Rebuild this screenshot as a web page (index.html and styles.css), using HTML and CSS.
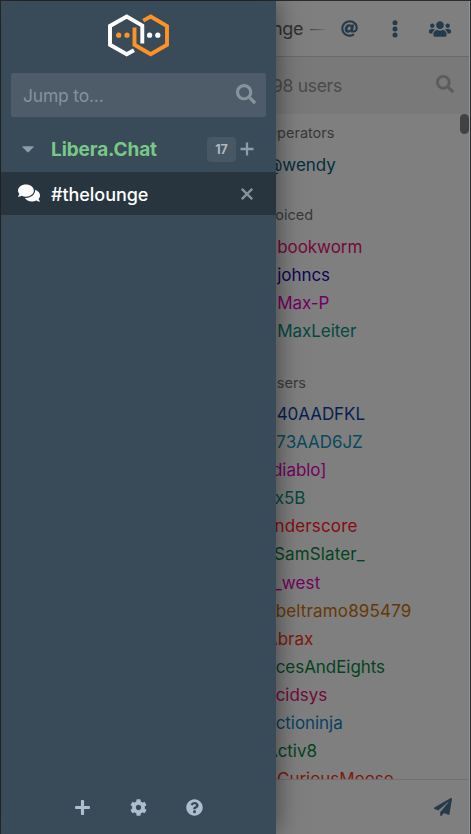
FILE: index.html
```html
<!DOCTYPE html>
<html lang="en">
<head>
<meta charset="utf-8">
<title>The Lounge</title>
<link rel="stylesheet" href="styles.css">
</head>
<body>
<svg class="defs" width="0" height="0">
  <symbol id="search" viewBox="0 0 512 512"><path d="M505 442.7L405.3 343c-4.5-4.5-10.6-7-17-7H372c27.6-35.3 44-79.7 44-128C416 93.1 322.9 0 208 0S0 93.1 0 208s93.1 208 208 208c48.3 0 92.7-16.4 128-44v16.3c0 6.4 2.5 12.5 7 17l99.7 99.7c9.4 9.4 24.6 9.4 33.9 0l28.3-28.3c9.4-9.4 9.4-24.6.1-34zM208 336c-70.7 0-128-57.2-128-128 0-70.7 57.2-128 128-128 70.7 0 128 57.2 128 128 0 70.7-57.2 128-128 128z"/></symbol>
</svg>
<div class="app">
  <main class="chat">
    <header class="topbar">
      <span class="title">#thelounge</span>
      <span class="topic">—</span>
      <svg class="icon-at" viewBox="0 0 512 512"><path d="M256 8C118.941 8 8 118.919 8 256c0 137.059 110.919 248 248 248 48.154 0 95.342-14.14 135.408-40.223 12.005-7.815 14.625-24.288 5.552-35.372l-10.177-12.433c-7.671-9.371-21.179-11.667-31.373-5.129C325.92 429.757 291.314 440 256 440c-101.458 0-184-82.542-184-184S154.542 72 256 72c100.139 0 184 57.619 184 160 0 38.786-21.093 79.742-58.17 83.693-17.349-.454-16.91-12.857-13.476-30.024l23.433-121.11C394.653 149.75 383.308 136 368.225 136h-44.981a13.518 13.518 0 0 0-13.432 11.993l-.01.092c-14.697-17.901-40.448-21.775-59.971-21.775-74.58 0-137.831 62.234-137.831 151.46 0 65.303 36.785 105.87 96 105.87 26.984 0 57.369-15.637 74.991-38.333 9.522 34.104 40.613 34.103 70.71 34.103C462.609 379.41 504 307.798 504 232 504 95.653 394.023 8 256 8zm-21.68 304.43c-22.249 0-36.07-15.623-36.07-40.771 0-44.993 30.779-72.729 58.63-72.729 22.292 0 35.601 15.241 35.601 40.77 0 45.061-33.875 72.73-58.161 72.73z"/></svg>
      <svg class="icon-more" viewBox="0 0 6 18"><circle cx="3" cy="2.7" r="2.5"/><circle cx="3" cy="8.9" r="2.5"/><circle cx="3" cy="15.1" r="2.5"/></svg>
      <svg class="icon-users" viewBox="0 0 640 512"><path d="M96 224c35.3 0 64-28.7 64-64s-28.7-64-64-64-64 28.7-64 64 28.7 64 64 64zm448 0c35.3 0 64-28.7 64-64s-28.7-64-64-64-64 28.7-64 64 28.7 64 64 64zm32 32h-64c-17.6 0-33.5 7.1-45.1 18.6 40.3 22.1 68.9 62 75.1 109.4h66c17.7 0 32-14.3 32-32v-32c0-35.3-28.7-64-64-64zm-256 0c61.9 0 112-50.1 112-112S381.9 32 320 32 208 82.1 208 144s50.1 112 112 112zm76.8 32h-8.3c-20.8 10-43.9 16-68.5 16s-47.6-6-68.5-16h-8.3C179.6 288 128 339.6 128 403.2V432c0 26.5 21.5 48 48 48h288c26.5 0 48-21.5 48-48v-28.8c0-63.6-51.6-115.2-115.2-115.2zm-223.7-13.4C161.5 263.1 145.6 256 128 256H64c-35.3 0-64 28.7-64 64v32c0 17.7 14.3 32 32 32h65.9c6.3-47.4 34.9-87.3 75.2-109.4z"/></svg>
    </header>
    <div class="user-search"><span>98 users</span><svg class="icon-search"><use href="#search"/></svg></div>
    <section class="userlist">
      <div class="names">
        <h3>Operators</h3>
        <p class="c-teal">@wendy</p>
        <h3>Voiced</h3>
        <p class="c-rose">+bookworm</p>
        <p class="c-indigo">+johncs</p>
        <p class="c-magenta">+Max-P</p>
        <p class="c-green">+MaxLeiter</p>
        <h3 class="regulars">Users</h3>
        <p class="c-navy">040AADFKL</p>
        <p class="c-cyan">073AAD6JZ</p>
        <p class="c-magenta">[diablo]</p>
        <p class="c-green narrow-lead">0x5B</p>
        <p class="c-red wide">_nderscore</p>
        <p class="c-forest wide">_SamSlater_</p>
        <p class="c-magenta wide">__west</p>
        <p class="c-brown wide">abeltramo895479</p>
        <p class="c-brick">Abrax</p>
        <p class="c-forest narrow-lead">AcesAndEights</p>
        <p class="c-rose narrow-lead">Acidsys</p>
        <p class="c-blue narrow-lead">Actioninja</p>
        <p class="c-forest">Activ8</p>
        <p class="c-brick">ACuriousMoose</p>
      </div>
      <div class="scrollbar"></div>
    </section>
    <footer class="compose"><svg class="icon-send" viewBox="0 0 512 512"><path d="M476 3.2L12.5 270.6c-18.1 10.4-15.8 35.6 2.2 43.2L121 358.4l287.3-253.2c5.5-4.9 13.3 2.6 8.6 8.3L176 407v80.5c0 23.6 28.5 32.9 42.5 15.8L282 426l124.6 52.2c14.2 6 30.4-2.9 33-18.2l72-432C515 7.8 493.3-6.8 476 3.2z"/></svg></footer>
  </main>

  <aside class="sidebar">
    <svg class="logo" viewBox="107 14 63 43" stroke-width="3.9">
      <path fill="none" stroke="#fff" d="M134 50.2l-7.3 4.1-16.7-9.5V26l16.7-9.5L142.3 25.6v17.8"/>
      <path fill="none" stroke="#ff9226" d="M143.2 20.6l7.5-4.1L167 26v18.8l-16.3 9.5-16.2-9.5V27.5"/>
      <g fill="#ff9226"><circle cx="118.7" cy="35.2" r="2.6"/><circle cx="127" cy="35.2" r="2.6"/></g>
      <g fill="#fff"><circle cx="149.6" cy="35.2" r="2.6"/><circle cx="157.8" cy="35.2" r="2.6"/></g>
    </svg>
    <div class="jump"><span>Jump to...</span><svg class="icon-jump"><use href="#search"/></svg></div>
    <div class="network">
      <svg class="caret" viewBox="0 0 12 7"><path d="M1 .3h10q.9.2.4 1L6.8 6.1q-.8.7-1.6 0L.6 1.3Q.1.5 1 .3z"/></svg>
      <span class="network-name">Libera.Chat</span>
      <span class="badge">17</span>
      <svg class="add" viewBox="0 0 14 14"><path d="M7 .5v13M.5 7h13"/></svg>
    </div>
    <div class="channel">
      <svg class="icon-chat" viewBox="0 0 576 512"><path d="M416 192c0-88.4-93.1-160-208-160S0 103.6 0 192c0 34.3 14.1 65.9 38 92-13.4 30.2-35.5 54.2-35.8 54.5-2.2 2.3-2.8 5.7-1.5 8.7S4.8 352 8 352c36.6 0 66.9-12.3 88.7-25 32.2 15.7 70.3 25 111.3 25 114.9 0 208-71.6 208-160zm122 220c23.9-26 38-57.7 38-92 0-66.9-53.5-124.2-129.3-148.1.9 6.6 1.3 13.3 1.3 20.1 0 105.9-107.7 192-240 192-10.8 0-21.3-.8-31.7-1.9C207.8 439.6 281.8 480 368 480c41 0 79.1-9.2 111.3-25 21.8 12.7 52.1 25 88.7 25 3.2 0 6.1-1.9 7.3-4.8 1.3-2.9.7-6.3-1.5-8.7-.3-.3-22.4-24.2-35.8-54.5z"/></svg>
      <span class="channel-name">#thelounge</span>
      <svg class="close" viewBox="0 0 12 12"><path d="M.8.8l10.4 10.4M11.2.8L.8 11.2"/></svg>
    </div>
    <nav class="bottom">
      <svg viewBox="0 0 448 512"><path d="M416 208H272V64c0-17.67-14.33-32-32-32h-32c-17.67 0-32 14.33-32 32v144H32c-17.67 0-32 14.33-32 32v32c0 17.67 14.33 32 32 32h144v144c0 17.67 14.33 32 32 32h32c17.67 0 32-14.33 32-32V304h144c17.67 0 32-14.33 32-32v-32c0-17.67-14.33-32-32-32z"/></svg>
      <svg viewBox="0 0 512 512"><path d="M487.4 315.7l-42.6-24.6c4.3-23.2 4.3-47 0-70.2l42.6-24.6c4.9-2.8 7.1-8.6 5.5-14-11.1-35.6-30-67.8-54.7-94.6-3.8-4.1-10-5.1-14.8-2.3L380.8 110c-17.9-15.4-38.5-27.3-60.8-35.1V25.8c0-5.6-3.9-10.5-9.4-11.7-36.7-8.2-74.3-7.8-109.2 0-5.5 1.2-9.4 6.1-9.4 11.7V75c-22.2 7.9-42.8 19.8-60.8 35.1L88.7 85.5c-4.9-2.8-11-1.9-14.8 2.3-24.7 26.7-43.6 58.9-54.7 94.6-1.7 5.4.6 11.2 5.5 14L67.3 221c-4.3 23.2-4.3 47 0 70.2l-42.6 24.6c-4.9 2.8-7.1 8.6-5.5 14 11.1 35.6 30 67.8 54.7 94.6 3.8 4.1 10 5.1 14.8 2.3l42.6-24.6c17.9 15.4 38.5 27.3 60.8 35.1v49.2c0 5.6 3.9 10.5 9.4 11.7 36.7 8.2 74.3 7.8 109.2 0 5.5-1.2 9.4-6.1 9.4-11.7v-49.2c22.2-7.9 42.8-19.8 60.8-35.1l42.6 24.6c4.9 2.8 11 1.9 14.8-2.3 24.7-26.7 43.6-58.9 54.7-94.6 1.5-5.5-.7-11.3-5.6-14.1zM256 336c-44.1 0-80-35.9-80-80s35.9-80 80-80 80 35.9 80 80-35.9 80-80 80z"/></svg>
      <svg viewBox="0 0 512 512"><path d="M504 256c0 136.997-111.043 248-248 248S8 392.997 8 256C8 119.083 119.043 8 256 8s248 111.083 248 248zM262.655 90c-54.497 0-89.255 22.957-116.549 63.758-3.536 5.286-2.353 12.415 2.715 16.258l34.699 26.31c5.205 3.947 12.621 3.008 16.665-2.122 17.864-22.658 30.113-35.797 57.303-35.797 20.429 0 45.698 13.148 45.698 32.958 0 14.976-12.363 22.667-32.534 33.976C247.128 238.528 216 254.941 216 296v4c0 6.627 5.373 12 12 12h56c6.627 0 12-5.373 12-12v-1.333c0-28.462 83.186-29.647 83.186-106.667 0-58.002-60.165-102-116.531-102zM256 338c-25.365 0-46 20.635-46 46 0 25.364 20.635 46 46 46s46-20.636 46-46c0-25.365-20.635-46-46-46z"/></svg>
    </nav>
  </aside>
</div>
</body>
</html>
```
FILE: styles.css
```css
* { box-sizing: border-box; }
body { margin: 0; background: #2b2c2e; font-family: Inter, "Liberation Sans", sans-serif; }
.defs { position: absolute; }
svg { display: block; flex: none; fill: currentColor; }
.app { position: relative; height: 834px; padding: 1px 1px 0; overflow: hidden; }

.chat { display: flex; flex-direction: column; height: 833px; background: #7f7f7f; border-right: 1px solid #959595; }
.topbar { display: flex; align-items: center; height: 56px; padding: 0 18px 0 0; border-bottom: 1px solid #6a6a6a; color: #253a4b; }
.title { flex: 1; text-align: right; font-size: 18px; line-height: 24px; letter-spacing: -0.4px; color: #303030; white-space: nowrap; }
.topic { flex: none; margin: 0 17px 0 7px; font-size: 14px; background: linear-gradient(90deg, #444, #707070); background-clip: text; color: transparent; }
.icon-at { width: 17px; height: 17px; }
.icon-more { width: 6px; height: 18px; margin-left: 34px; }
.icon-users { width: 22px; height: 18px; margin-left: 31px; }
.user-search { display: flex; align-items: center; justify-content: space-between; height: 57px; padding: 0 15px 0 271px; background: #797979; color: #4a4a4a; font-size: 17.5px; letter-spacing: -0.3px; }
.icon-search { width: 18px; height: 18px; margin-top: -3px; color: #5c5c5c; }
.userlist { display: flex; justify-content: space-between; flex: 1; min-height: 0; overflow: hidden; }
.names { padding-left: 265px; }
.names h3 { height: 37px; margin: 17px 0 0; padding-top: 9px; font-size: 14.5px; font-weight: 400; line-height: 20px; color: #393939; }
.names h3:first-child { margin-top: 0; }
.names h3.regulars { height: 38px; padding-top: 10.5px; }
.names p { height: 28.05px; margin: 0; font-size: 17px; line-height: 28px; letter-spacing: -0.05px; white-space: nowrap; }
.names p.wide { letter-spacing: 0.15px; }
.names p.narrow-lead { text-indent: -2px; }
.scrollbar { width: 9px; height: 20px; border-radius: 5px; background: #424242; }
.c-teal { color: #022e3d; }
.c-rose { color: #74083a; }
.c-indigo { color: #0c0658; }
.c-magenta { color: #750060; }
.c-green { color: #04483f; }
.c-navy { color: #071f50; }
.c-cyan { color: #064a5c; }
.c-red { color: #860b12; }
.c-forest { color: #04431f; }
.c-brown { color: #653807; }
.c-brick { color: #7e180c; }
.c-blue { color: #073f60; }
.compose { display: flex; align-items: center; justify-content: flex-end; height: 55px; padding-right: 17px; border-top: 1px solid #707070; color: #253a4b; }
.icon-send { width: 18px; height: 18px; }

.sidebar { position: absolute; top: 1px; left: 1px; display: flex; flex-direction: column; width: 275px; height: 833px; background: #394a58; box-shadow: 0 0 25px rgba(0, 0, 0, .5); }
.logo { width: 63px; height: 43px; margin: 13px 0 0 106px; }
.jump { display: flex; align-items: center; justify-content: space-between; height: 44px; margin: 16px 10px 0; padding: 0 10px 0 12px; border-radius: 2px; background: #4d5c68; color: #87929b; font-size: 17.5px; letter-spacing: -0.2px; }
.icon-jump { width: 20px; height: 20px; margin-top: -2px; }
.network { display: flex; align-items: center; height: 42px; margin-top: 11px; padding: 0 22px 0 21px; margin-bottom: 2px; color: #8f9ba5; }
.caret { width: 12px; height: 7px; }
.network-name { flex: 1; margin-left: 17px; color: #78c987; font-size: 19px; font-weight: 700; letter-spacing: -0.1px; }
.badge { width: 29px; height: 25px; border-radius: 4px; background: #485764; color: #afb7be; font-size: 12.5px; font-weight: 700; line-height: 25px; text-align: center; }
.add { width: 14px; height: 14px; margin-left: 4px; stroke: currentColor; stroke-width: 2.3; }
.channel { display: flex; align-items: center; height: 43px; padding: 1px 23px 0 17px; background: #28353e; color: #fff; }
.icon-chat { width: 22px; height: 20px; margin-top: -3px; }
.channel-name { flex: 1; margin-left: 11px; font-size: 18px; font-weight: 500; letter-spacing: -0.05px; }
.close { width: 12px; height: 12px; stroke: #87929b; stroke-width: 2.3; }
.bottom { display: flex; justify-content: center; gap: 39px; margin-top: auto; height: 53px; padding-top: 18px; color: #acbfcf; }
.bottom svg { width: 17px; height: 17px; }
```
